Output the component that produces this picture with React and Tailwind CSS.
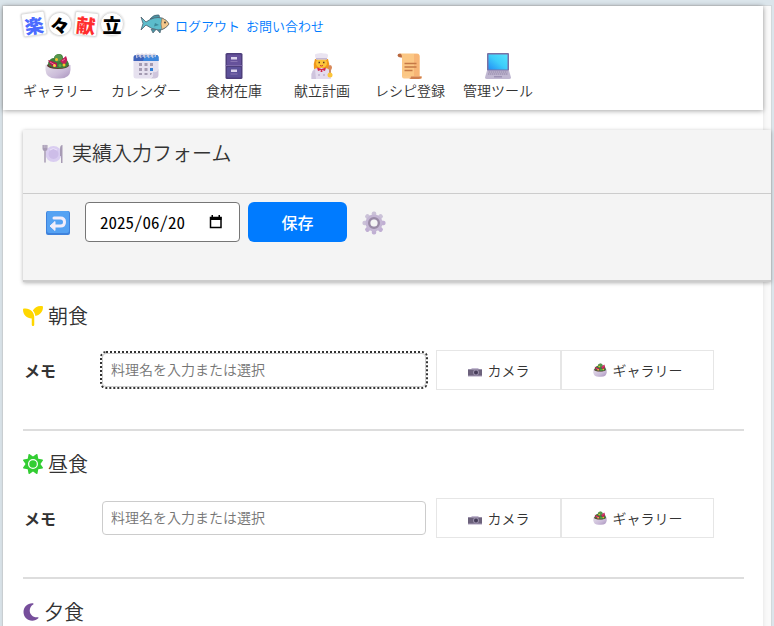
import { useState } from "react";
import { FaMoon, FaSeedling, FaSun } from "react-icons/fa6";

function SaladIcon({ className }) {
  return (
    <svg viewBox="0 0 26 26" className={className} aria-hidden="true">
      <defs>
        <linearGradient id="bowl" x1="0" y1="0" x2="1" y2="1">
          <stop offset="0" stopColor="#e6e0ea" />
          <stop offset="0.6" stopColor="#cbbcd9" />
          <stop offset="1" stopColor="#a993bd" />
        </linearGradient>
      </defs>
      <path d="M0.5 12 Q13 8 25.5 12 V17 Q25 25.5 15 25.5 H11 Q1 25.5 0.5 17Z" fill="url(#bowl)" />
      <ellipse cx="13" cy="12.500" rx="11" ry="3.500" fill="#5a3a2e" />
      <path d="M3 10 Q5 5 9 5 Q10 1 14 1 Q18 1 18 5 Q22 5 24 11 L22 14 Q13 17 4 13Z" fill="#3f7d3c" />
      <path d="M9 4 Q12 0 16 2 L18 7 L11 9Z" fill="#57974c" />
      <path d="M3 7 L12 10 L12 14 Q6 15 3 7Z" fill="#b8174f" />
      <path d="M15 8 L21 3 Q24 9 19 12Z" fill="#c4205a" />
      <path d="M5 9 L10 12 M17 8 L20 6" stroke="#ee6a98" strokeWidth="1" />
      <circle cx="11.500" cy="6.500" r="1.500" fill="#f5c32c" />
      <circle cx="9.500" cy="12.500" r="1.500" fill="#f9d54a" />
      <circle cx="19" cy="12" r="1.500" fill="#f5c32c" />
      <circle cx="15" cy="12.500" r="1.500" fill="#65a94f" />
    </svg>
  );
}

function CalendarIcon() {
  return (
    <svg viewBox="0 0 26 26" className="size-[26px]" aria-hidden="true">
      <path d="M0.500 6 H25.500 V17 L17 25.500 H3 Q0.500 25.500 0.500 23Z" fill="#e6e1ef" />
      <path d="M25.500 16 Q24 20 20 19 Q21 24 17 25.500 H22 Q25.500 25 25.500 22Z" fill="#cfc5dc" />
      <path d="M0.500 8 V4 Q0.500 2 3 2 H23 Q25.500 2 25.500 4 V8Z" fill="#3f63bb" />
      <path d="M12 2 H23 Q25.500 2 25.500 4 V8 H10Z" fill="#3d87dc" />
      {[4, 8, 12, 16, 20].map((x) => (
        <path key={x} d={`M${x} 5 Q${x - 1} 1 ${x + 1} 1 Q${x + 3} 1 ${x + 2} 4`} fill="none" stroke="#d7d2e2" strokeWidth="1.2" />
      ))}
      <g fill="#a49bb2">
        <path d="M6 10h3v3H6zM11.500 10h3v3h-3zM17 10h3v3h-3zM6 15h3v3H6zM11.500 15h3v3h-3zM6 20h3v2H6zM11.500 20h3v2h-3z" />
      </g>
      <path d="M17 15h3v3h-3z" fill="#2f7fd6" />
      <path d="M17 20h2l-1 2h-1z" fill="#a49bb2" />
    </svg>
  );
}

function CabinetIcon() {
  return (
    <svg viewBox="0 0 26 26" className="size-[26px]" aria-hidden="true">
      <rect x="4.500" y="0" width="17" height="26" rx="1.500" fill="#4e3f7c" />
      <rect x="6" y="1.500" width="14" height="10.500" rx="1" fill="#66529b" />
      <rect x="6" y="14" width="14" height="10.500" rx="1" fill="#5c5199" />
      <path d="M4.500 12.500 H21.500" stroke="#8b77b8" strokeWidth="0.800" />
      <rect x="10" y="4" width="6" height="2.500" fill="#dcd5ec" />
      <rect x="10" y="16.500" width="6" height="2.500" fill="#dcd5ec" />
      <path d="M9.500 8.500h7M9.500 21h7" stroke="#8874b2" />
    </svg>
  );
}

function CookIcon() {
  return (
    <svg viewBox="0 0 26 26" className="size-[26px]" aria-hidden="true">
      <path d="M6 6 Q4 11 5 16 H20 Q21 11 19 6Z" fill="#f0991c" />
      <path d="M2.500 26 V21 Q3 15 9 15 H16 Q21 15 22 21 V26Z" fill="#e4dcee" />
      <path d="M2.500 26 V21 Q3 18 6 16 L7 26Z" fill="#cfc4dd" />
      <ellipse cx="12.500" cy="10" rx="5.500" ry="5" fill="#fcc53a" />
      <path d="M7 6.500 L6 3 Q5.500 0.500 9 0.500 Q12 -0.500 15 0.500 Q19.500 0 19 3 L18 6.500Z" fill="#eae4f1" />
      <path d="M7 5 H18 V6.500 H7Z" fill="#c5b8d4" />
      <path d="M9.500 9.500h1.500M14 9.500h1.500" stroke="#5b3a22" strokeWidth="1.300" />
      <path d="M11 12.500 Q12.500 13.500 14 12.500" stroke="#c33" fill="none" />
      <path d="M8 14.500 L12.500 16 L17 14.500 L16 18 L13 17 L13.500 19 L11.500 19 L12 17 L9 18Z" fill="#d3274c" />
      <circle cx="10" cy="22" r="0.800" fill="#a796bb" />
      <circle cx="15" cy="22" r="0.800" fill="#a796bb" />
      <path d="M21 21 V14" stroke="#b8683e" strokeWidth="1.500" />
      <ellipse cx="21" cy="14.500" rx="2" ry="2.500" fill="#d9895a" />
      <circle cx="21" cy="22" r="2.500" fill="#fcc53a" />
    </svg>
  );
}

function ScrollIcon() {
  return (
    <svg viewBox="0 0 26 26" className="size-[26px]" aria-hidden="true">
      <path d="M3 0.500 H20 Q22.500 0.500 22.500 3 V24 H5 V5Z" fill="#fbc784" />
      <path d="M17 1 H20 Q22.500 1 22.500 3 V24 H17Z" fill="#f7b576" />
      <path d="M5 4.500 Q1 5 0.500 2.500 Q0.500 0.500 3 0.500 Q5 1 5 4.500Z" fill="#b9683e" />
      <path d="M5 23 H22 Q25 23 25 25.500 H7 Q5 25.500 5 23Z" fill="#fbc98c" />
      <path d="M14 23.500 H25 Q24.500 26 22 26 H12 Q14 25.500 14 23.500Z" fill="#cf7f50" />
      <path d="M7.500 10.500h12M7.500 14h12M7.500 17.500h8" stroke="#c57946" strokeWidth="1.300" />
    </svg>
  );
}

function LaptopIcon() {
  return (
    <svg viewBox="0 0 26 26" className="size-[26px]" aria-hidden="true">
      <defs>
        <linearGradient id="screen" x1="0" y1="1" x2="1" y2="0">
          <stop offset="0" stopColor="#228ff5" />
          <stop offset="0.500" stopColor="#3ecdfa" />
          <stop offset="1" stopColor="#55e2fc" />
        </linearGradient>
      </defs>
      <rect x="2" y="0" width="22" height="18" rx="1" fill="#7970a5" />
      <rect x="3.500" y="1.500" width="19" height="15" fill="url(#screen)" />
      <path d="M2 17.500 H24 L26 24.500 Q26 26 24 26 H2 Q0 26 0 24.500Z" fill="#c0b7d1" />
      <path d="M3.500 19h19M3 21h20" stroke="#8e84a6" strokeWidth="1.200" strokeDasharray="1.500 0.500" />
      <path d="M9 23h8v1.500H9z" fill="#9e93b5" />
    </svg>
  );
}

function FishIcon() {
  return (
    <svg viewBox="0 0 30 20" className="h-[20px] w-[30px]" aria-hidden="true">
      <path d="M10 5 Q14 0 19 1 L20 5Z M11 15 L13 19 L16 15.500Z M17 15.500 L20 19 L21 15Z" fill="#4b95a5" stroke="#4c5f6d" strokeWidth="0.700" />
      <path d="M1 3 L6 8 Q14 2 22 4 Q27 6 29 10 Q25 16 18 16 Q11 15 6 11 L1 16 L3 9.500Z" fill="#5cbccb" stroke="#4c5f6d" strokeWidth="0.800" />
      <path d="M22 4 Q27 6 29 10 Q26 14 22 15.500 Q20 10 22 4Z" fill="#f3c78b" stroke="#6b6660" strokeWidth="0.600" />
      <path d="M15 9 L19 11 L14 12.500Z" fill="#3d8999" />
      <circle cx="25" cy="8.500" r="0.900" fill="#333" />
    </svg>
  );
}

function PlateIcon() {
  return (
    <svg viewBox="0 0 22 20" className="h-[20px] w-[22px]" aria-hidden="true">
      <circle cx="11.500" cy="10" r="8" fill="#d9cdf0" />
      <circle cx="11.500" cy="10" r="5" fill="#cdbde8" />
      <path d="M8 6 Q11 3 15 6" stroke="#eae2f8" fill="none" />
      <path d="M0.500 1 H5.500 V5 Q5.500 7 3 7 Q0.500 7 0.500 5Z" fill="#a79bb4" />
      <path d="M3 6 V18" stroke="#a79bb4" strokeWidth="1.500" strokeLinecap="round" />
      <path d="M2.200 0v4M4 0v4" stroke="#e2dce8" strokeWidth="0.500" />
      <path d="M20.500 1 V19 H19 V12 H18 V5 Q18 1 20.500 1Z" fill="#a79bb4" />
    </svg>
  );
}

function ReturnIcon() {
  return (
    <svg viewBox="0 0 24 24" className="size-6" aria-hidden="true">
      <rect width="24" height="24" rx="2" fill="#3f82dc" />
      <rect x="1" y="0" width="22" height="22" rx="2" fill="#55a2f3" />
      <path d="M8 7 H14.500 Q18.500 7 18.500 11 Q18.500 15 14.500 15 H8" fill="none" stroke="#f2edfa" strokeWidth="3" strokeLinecap="round" />
      <path d="M9 10.500 V19.500 L4 15Z" fill="#f2edfa" stroke="#f2edfa" strokeLinejoin="round" />
    </svg>
  );
}

function GearIcon() {
  return (
    <svg viewBox="-12 -12 24 24" className="size-6" aria-hidden="true">
      {[0, 45, 90, 135, 180, 225, 270, 315].map((a) => (
        <rect key={a} x="-2.200" y="-11.500" width="4.400" height="6" rx="1.800" fill={a > 45 && a < 250 ? "#c0afd3" : "#cbc2d8"} transform={`rotate(${a})`} />
      ))}
      <circle r="8.500" fill="#c4b6d4" />
      <circle r="4.800" fill="none" stroke="#998aa6" strokeWidth="2.400" />
      <circle r="3.500" fill="#f4f4f4" />
    </svg>
  );
}

function CameraIcon() {
  return (
    <svg viewBox="0 0 14 14" className="size-[14px]" aria-hidden="true">
      <path d="M0 6 H3 L4 5 H10 L11 6 H14 V8 H0Z" fill="#c4bad2" />
      <rect y="6.500" width="14" height="6.500" fill="#6c627c" />
      <circle cx="8" cy="9.500" r="3" fill="#9b90ab" />
      <circle cx="8" cy="9.500" r="2" fill="#453c58" />
      <path d="M0 12.500h14v1H0z" fill="#a89db9" />
    </svg>
  );
}

const navItems = [
  { label: "ギャラリー", icon: <SaladIcon className="size-[26px]" /> },
  { label: "カレンダー", icon: <CalendarIcon /> },
  { label: "食材在庫", icon: <CabinetIcon /> },
  { label: "献立計画", icon: <CookIcon /> },
  { label: "レシピ登録", icon: <ScrollIcon /> },
  { label: "管理ツール", icon: <LaptopIcon /> },
];

const meals = [
  { id: "breakfast", name: "朝食", icon: <FaSeedling className="text-[#ffd700]" />, open: true, active: true },
  { id: "lunch", name: "昼食", icon: <FaSun className="text-[#32cd32]" />, open: true },
  { id: "dinner", name: "夕食", icon: <FaMoon className="-mx-[2px] text-[#764e9b]" /> },
];

function Logo() {
  const tile = "flex size-6 items-center justify-center border border-[#ddd] text-[19px] leading-none font-black shadow-[0_0_2px_rgba(0,0,0,0.25)]";
  return (
    <a href="#" className="flex items-center gap-[2px]">
      <span className={`${tile} -rotate-8 rounded-xs text-[#4b6bff]`}>楽</span>
      <span className={`${tile} rotate-12 rounded-full text-black`}>々</span>
      <span className={`${tile} rotate-6 rounded-xs text-[#ff2d2d]`}>献</span>
      <span className={`${tile} rounded-full text-black`}>立</span>
    </a>
  );
}

function Header() {
  return (
    <header className="bg-white pt-1 pb-[9px] shadow-[0_1px_5px_rgba(0,0,0,0.35)]">
      <div className="flex h-7 items-center pl-[19px]">
        <Logo />
        <div className="ml-4">
          <FishIcon />
        </div>
        <div className="ml-[5px] flex gap-[6px] pt-1 text-[13px] text-[#007bff]">
          <a href="#">ログアウト</a>
          <a href="#">お問い合わせ</a>
        </div>
      </div>
      <nav className="mt-[15px] flex pl-[11px]">
        {navItems.map((item) => (
          <a key={item.label} href="#" className="flex w-22 flex-col items-center text-[14px] leading-[22px] whitespace-nowrap">
            {item.icon}
            {item.label}
          </a>
        ))}
      </nav>
    </header>
  );
}

function RecordForm() {
  const [date, setDate] = useState("2025/06/20");

  return (
    <form className="-mr-2 ml-5 bg-[#f4f4f4] shadow-[0_1px_4px_rgba(0,0,0,0.3)]" onSubmit={(e) => e.preventDefault()}>
      <div className="flex h-16 items-start gap-2 border-b border-[#ccc] pt-2 pl-[19px]">
        <div className="pt-[6px]">
          <PlateIcon />
        </div>
        <h1 className="text-[20px] leading-[30px]">実績入力フォーム</h1>
      </div>
      <div className="flex h-[88px] items-start border-b-2 border-[#ccc] pt-2 pl-[23px]">
        <button type="button" aria-label="戻る" className="mt-[9px]">
          <ReturnIcon />
        </button>
        <div className="ml-[15px] flex h-10 w-[155px] items-center rounded-sm border border-[#767676] bg-white pl-[14px] text-black">
          <input
            type="text"
            aria-label="日付"
            value={date}
            onChange={(e) => setDate(e.target.value)}
            className="w-[109px] font-['Noto_Sans_Mono_CJK_JP','Noto_Sans_CJK_JP',monospace] text-[17px] outline-none [font-feature-settings:'hwid']"
          />
          <button type="button" aria-label="カレンダーを開く">
            <svg viewBox="0 0 14 16" className="h-4 w-[14px]">
              <path d="M1.500 3.500h10.500v10H1.500z" fill="none" stroke="#000" strokeWidth="1.500" />
              <path d="M1 3h11.500v3H1zM2.500 1h1.500v2H2.500zM9.500 1H11v2H9.500z" />
            </svg>
          </button>
        </div>
        <button type="submit" className="ml-2 h-10 w-[99px] rounded-md bg-[#007bff] text-[16px] font-medium text-white">
          保存
        </button>
        <button type="button" aria-label="設定" className="mt-[9px] ml-[15px]">
          <GearIcon />
        </button>
      </div>
    </form>
  );
}

function MealRow({ meal }) {
  const button = "flex h-10 items-center justify-center gap-[6px] border border-[#e6e6e6] text-[14px]";
  return (
    <div className="mt-[19px] mr-[30px] flex items-center">
      <label htmlFor={meal.id} className="w-[79px] pl-px text-[16px] font-bold">
        メモ
      </label>
      <input
        id={meal.id}
        type="text"
        placeholder="料理名を入力または選択"
        className={`h-[34px] min-w-0 flex-1 rounded-sm border border-[#ccc] px-2 pb-[2px] text-[14px] placeholder:text-[#757575] ${
          meal.active ? "outline-2 outline-[#333] outline-dotted" : "outline-none"
        }`}
      />
      <button type="button" className={`${button} ml-[10px] w-[125px]`}>
        <CameraIcon />
        カメラ
      </button>
      <button type="button" className={`${button} w-[153px]`}>
        <SaladIcon className="size-[14px]" />
        ギャラリー
      </button>
    </div>
  );
}

function MealSection({ meal }) {
  return (
    <section className="mr-[19px] ml-5 h-[148px] border-b-2 border-[#ddd] pt-[18px]">
      <h2 className="flex items-center gap-[5px] text-[20px] leading-[30px]">
        {meal.icon}
        {meal.name}
      </h2>
      {meal.open && <MealRow meal={meal} />}
    </section>
  );
}

export default function App() {
  return (
    <div
      lang="ja"
      className="h-screen overflow-hidden bg-[#dbe5eb] px-[2px] pt-[5px] font-['Noto_Sans_CJK_JP',sans-serif] font-[350] text-[#333]"
    >
      <div className="min-h-full border border-[#d3d8db] bg-[#fafafa] pr-2">
        <div className="min-h-screen bg-white shadow-[0_0_5px_rgba(0,0,0,0.1)]">
          <Header />
          <main className="pt-5">
            <RecordForm />
            <div className="pt-px">
              {meals.map((meal) => (
                <MealSection key={meal.id} meal={meal} />
              ))}
            </div>
          </main>
        </div>
      </div>
    </div>
  );
}
